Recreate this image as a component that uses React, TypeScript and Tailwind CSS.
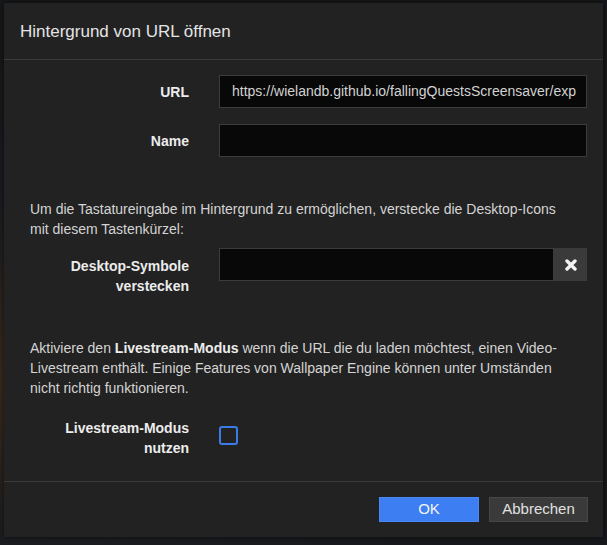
import React from "react";

export default function App() {
  return (
    <div
      className="w-[607px] h-[545px] overflow-hidden pt-[3px] pl-[4px]"
      style={{
        background:
          "radial-gradient(ellipse at 0% 70%, #3a2a1c 0%, #1b1d20 30%, #16181b 60%), #16181b",
        fontFamily: '"Liberation Sans", Arial, sans-serif',
      }}
    >
      <div className="w-[599px] h-[534px] bg-[#222222] flex flex-col shadow-[0_0_6px_rgba(0,0,0,0.6)]">
        {/* Header */}
        <div className="h-[57px] flex items-center pl-[16px] pt-[1px] border-b border-[#3a3a3a] shrink-0">
          <span className="text-[17px] text-[#e4e4e4]">Hintergrund von URL öffnen</span>
        </div>

        {/* Body */}
        <div className="flex-1 flex flex-col pl-[26px] pr-[16px] pt-[15px]">
          {/* URL */}
          <div className="flex items-start">
            <div className="w-[159px] text-right text-[14px] leading-[20px] font-bold text-[#ececec] pt-[7px]">
              URL
            </div>
            <div className="ml-[30px] w-[368px] h-[33px] bg-[#080808] border border-[#3c3c3c] px-[12px] flex items-center overflow-hidden">
              <span className="text-[14px] text-[#d2d2d2] whitespace-nowrap">
                https://wielandb.github.io/fallingQuestsScreensaver/exp
              </span>
            </div>
          </div>

          {/* Name */}
          <div className="flex items-start mt-[16px]">
            <div className="w-[159px] text-right text-[14px] leading-[20px] font-bold text-[#ececec] pt-[7px]">
              Name
            </div>
            <div className="ml-[30px] w-[368px] h-[33px] bg-[#080808] border border-[#3c3c3c]" />
          </div>

          {/* Paragraph 1 */}
          <p className="mt-[42px] text-[14px] leading-[20px] text-[#d4d4d4]">
            Um die Tastatureingabe im Hintergrund zu ermöglichen, verstecke die Desktop-Icons
            <br />
            mit diesem Tastenkürzel:
          </p>

          {/* Desktop-Symbole */}
          <div className="flex items-start mt-[9px]">
            <div className="w-[159px] text-right text-[14px] leading-[20px] font-bold text-[#ececec] pt-[8px]">
              Desktop-Symbole
              <br />
              verstecken
            </div>
            <div className="ml-[30px] w-[368px] h-[33px] flex">
              <div className="flex-1 bg-[#080808] border border-[#3c3c3c]" />
              <div className="w-[33px] h-[33px] bg-[#3a3a3a] flex items-center justify-center">
                <svg width="12" height="12" viewBox="0 0 12 12">
                  <path
                    d="M2 2 L10 10 M10 2 L2 10"
                    stroke="#f2f2f2"
                    strokeWidth="3.4"
                    strokeLinecap="round"
                  />
                </svg>
              </div>
            </div>
          </div>

          {/* Paragraph 2 */}
          <p className="mt-[42px] text-[14px] leading-[20px] text-[#d4d4d4]">
            Aktiviere den <b className="font-bold text-[#ececec]">Livestream-Modus</b> wenn die URL die du laden möchtest, einen Video-
            <br />
            Livestream enthält. Einige Features von Wallpaper Engine können unter Umständen
            <br />
            nicht richtig funktionieren.
          </p>

          {/* Livestream */}
          <div className="flex items-start mt-[20px]">
            <div className="w-[159px] text-right text-[14px] leading-[20px] font-bold text-[#ececec]">
              Livestream-Modus
              <br />
              nutzen
            </div>
            <div className="ml-[30px] mt-[8px] w-[19px] h-[19px] rounded-[3px] border-2 border-[#3b7be6]" />
          </div>
        </div>

        {/* Footer */}
        <div className="h-[56px] border-t border-[#3a3a3a] flex items-start justify-end pr-[15px] pt-[15px] gap-[10px] shrink-0">
          <div className="w-[100px] h-[25px] bg-[#3d7ff2] border border-[#4a88f5] flex items-center justify-center text-[15px] text-[#f4f4f4]">
            OK
          </div>
          <div className="w-[99px] h-[25px] bg-[#3a3a3a] border border-[#474747] flex items-center justify-center text-[15px] text-[#e0e0e0]">
            Abbrechen
          </div>
        </div>
      </div>
    </div>
  );
}
